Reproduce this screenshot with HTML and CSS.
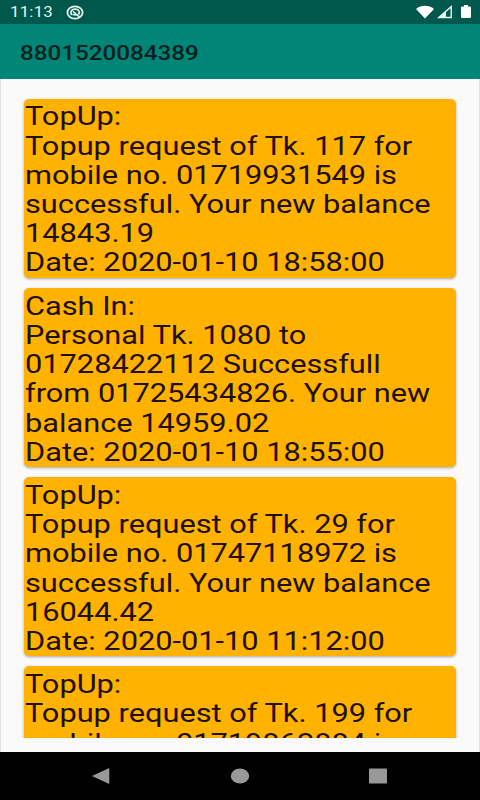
FILE: index.html
```html
<!DOCTYPE html>
<html lang="en">
<head>
  <meta charset="UTF-8">
  <meta name="viewport" content="width=device-width, initial-scale=1.0">
  <title>8801520084389</title>
  <link rel="stylesheet" href="styles.css">
</head>
<body>
  <div class="status-bar">
    <span class="time">11:13</span>
    <svg class="app-icon" width="18" height="15" viewBox="0 0 18 15">
      <ellipse cx="9" cy="7.5" rx="7.6" ry="6.2" fill="none" stroke="#e4f5f1" stroke-width="1.8"/>
      <path d="M5.8 10C3.6 7 5.8 4.1 9 4.1c3.800 0 5.4 3 3.6 5.4" fill="none" stroke="#e4f5f1" stroke-width="1.7"/>
      <path d="M7 6.4l7 6M6.5 9.5l4 .5" fill="none" stroke="#e4f5f1" stroke-width="1.5"/>
    </svg>
    <div class="status-icons">
      <svg width="20" height="14" viewBox="0 0 20 14"><path d="M1 4C6-.3 14-.3 19 4L10 13.5z" fill="#fff"/></svg>
      <svg width="16" height="14" viewBox="0 0 16 14">
        <path d="M1.8 12.5L14.2 1.6v10.9z" fill="none" stroke="#e4f5f1" stroke-width="1.4"/>
        <path d="M1 13L9 6v7z" fill="#e4f5f1"/>
      </svg>
      <svg width="10" height="14" viewBox="0 0 10 14"><path d="M3 0h4v1.5h2q1 0 1 1V12q0 1-1 1H1q-1 0-1-1V2.5q0-1 1-1h2z" fill="#fff"/></svg>
    </div>
  </div>
  <header class="app-bar">
    <h1>8801520084389</h1>
  </header>
  <main class="content">
    <div class="messages">
      <div class="card">
        <p>TopUp:<br>Topup request of Tk. 117 for<br>mobile no. 01719931549 is<br>successful. Your new balance<br>14843.19<br>Date: 2020-01-10 18:58:00</p>
      </div>
      <div class="card">
        <p>Cash In:<br>Personal Tk. 1080 to<br>01728422112 Successfull<br>from 01725434826. Your new<br>balance 14959.02<br>Date: 2020-01-10 18:55:00</p>
      </div>
      <div class="card">
        <p>TopUp:<br>Topup request of Tk. 29 for<br>mobile no. 01747118972 is<br>successful. Your new balance<br>16044.42<br>Date: 2020-01-10 11:12:00</p>
      </div>
      <div class="card">
        <p>TopUp:<br>Topup request of Tk. 199 for<br>mobile no. 01719862884 is</p>
      </div>
    </div>
  </main>
  <nav class="nav-bar">
    <svg width="20" height="18" viewBox="0 0 20 18"><path d="M0 9L17.3 1v16z" fill="#999"/></svg>
    <svg width="20" height="18" viewBox="0 0 20 18"><ellipse cx="10" cy="9" rx="9.2" ry="7.5" fill="#999"/></svg>
    <svg width="20" height="18" viewBox="0 0 20 18"><rect x="1" y="1.5" width="18" height="15" rx="1" fill="#999"/></svg>
  </nav>
</body>
</html>
```
FILE: styles.css
```css
* {margin: 0; padding: 0; box-sizing: border-box;}
body {
  font-family: Roboto, sans-serif;
  background: #fafafa;
  height: 800px;
  display: flex;
  flex-direction: column;
  overflow: hidden;
}
svg {
  display: block;
}
.status-bar {
  height: 24px;
  flex: none;
  background: #00574b;
  color: #e4f5f1;
  display: flex;
  align-items: center;
  padding: 0 9px 0 10px;
}
.time {
  width: 56px;
  font-size: 14px;
  letter-spacing: 0.2px;
  transform: scaleX(1.2);
  transform-origin: left;
}
.status-icons {
  display: flex;
  gap: 3px;
  align-items: center;
  margin-left: auto;
}
.status-icons svg:first-child {
  margin-right: -1px;
}
.status-icons svg:last-child {
  margin-left: 5px;
}
.app-bar {
  height: 55px;
  flex: none;
  background: #008577;
  display: flex;
  align-items: center;
  padding: 2px 0 0 20px;
}
.app-bar h1 {
  font-size: 20px;
  font-weight: 500;
  color: #04211e;
  transform: scaleX(1.21);
  transform-origin: left;
}
.content {
  height: 673px;
  flex: none;
  border: 1px solid #e2e2e2;
  border-width: 0 1px;
}
.messages {
  height: 659px;
  padding: 19.5px 23.5px 0 23px;
  overflow: hidden;
}
.card {
  height: 179px;
  margin-bottom: 10.3px;
  padding: 3.9px 0 0 0.5px;
  background: #ffb300;
  border-radius: 5px;
  box-shadow: 0 1px 3px rgba(0,0,0,0.35);
}
.card p {
  width: 350px;
  font-size: 25px;
  line-height: 29.2px;
  color: #220f05;
  white-space: nowrap;
  transform: scaleX(1.23);
  transform-origin: left;
}
.nav-bar {
  flex: 1;
  background: #000;
  display: flex;
  justify-content: center;
  align-items: center;
  gap: 118px;
}
```
